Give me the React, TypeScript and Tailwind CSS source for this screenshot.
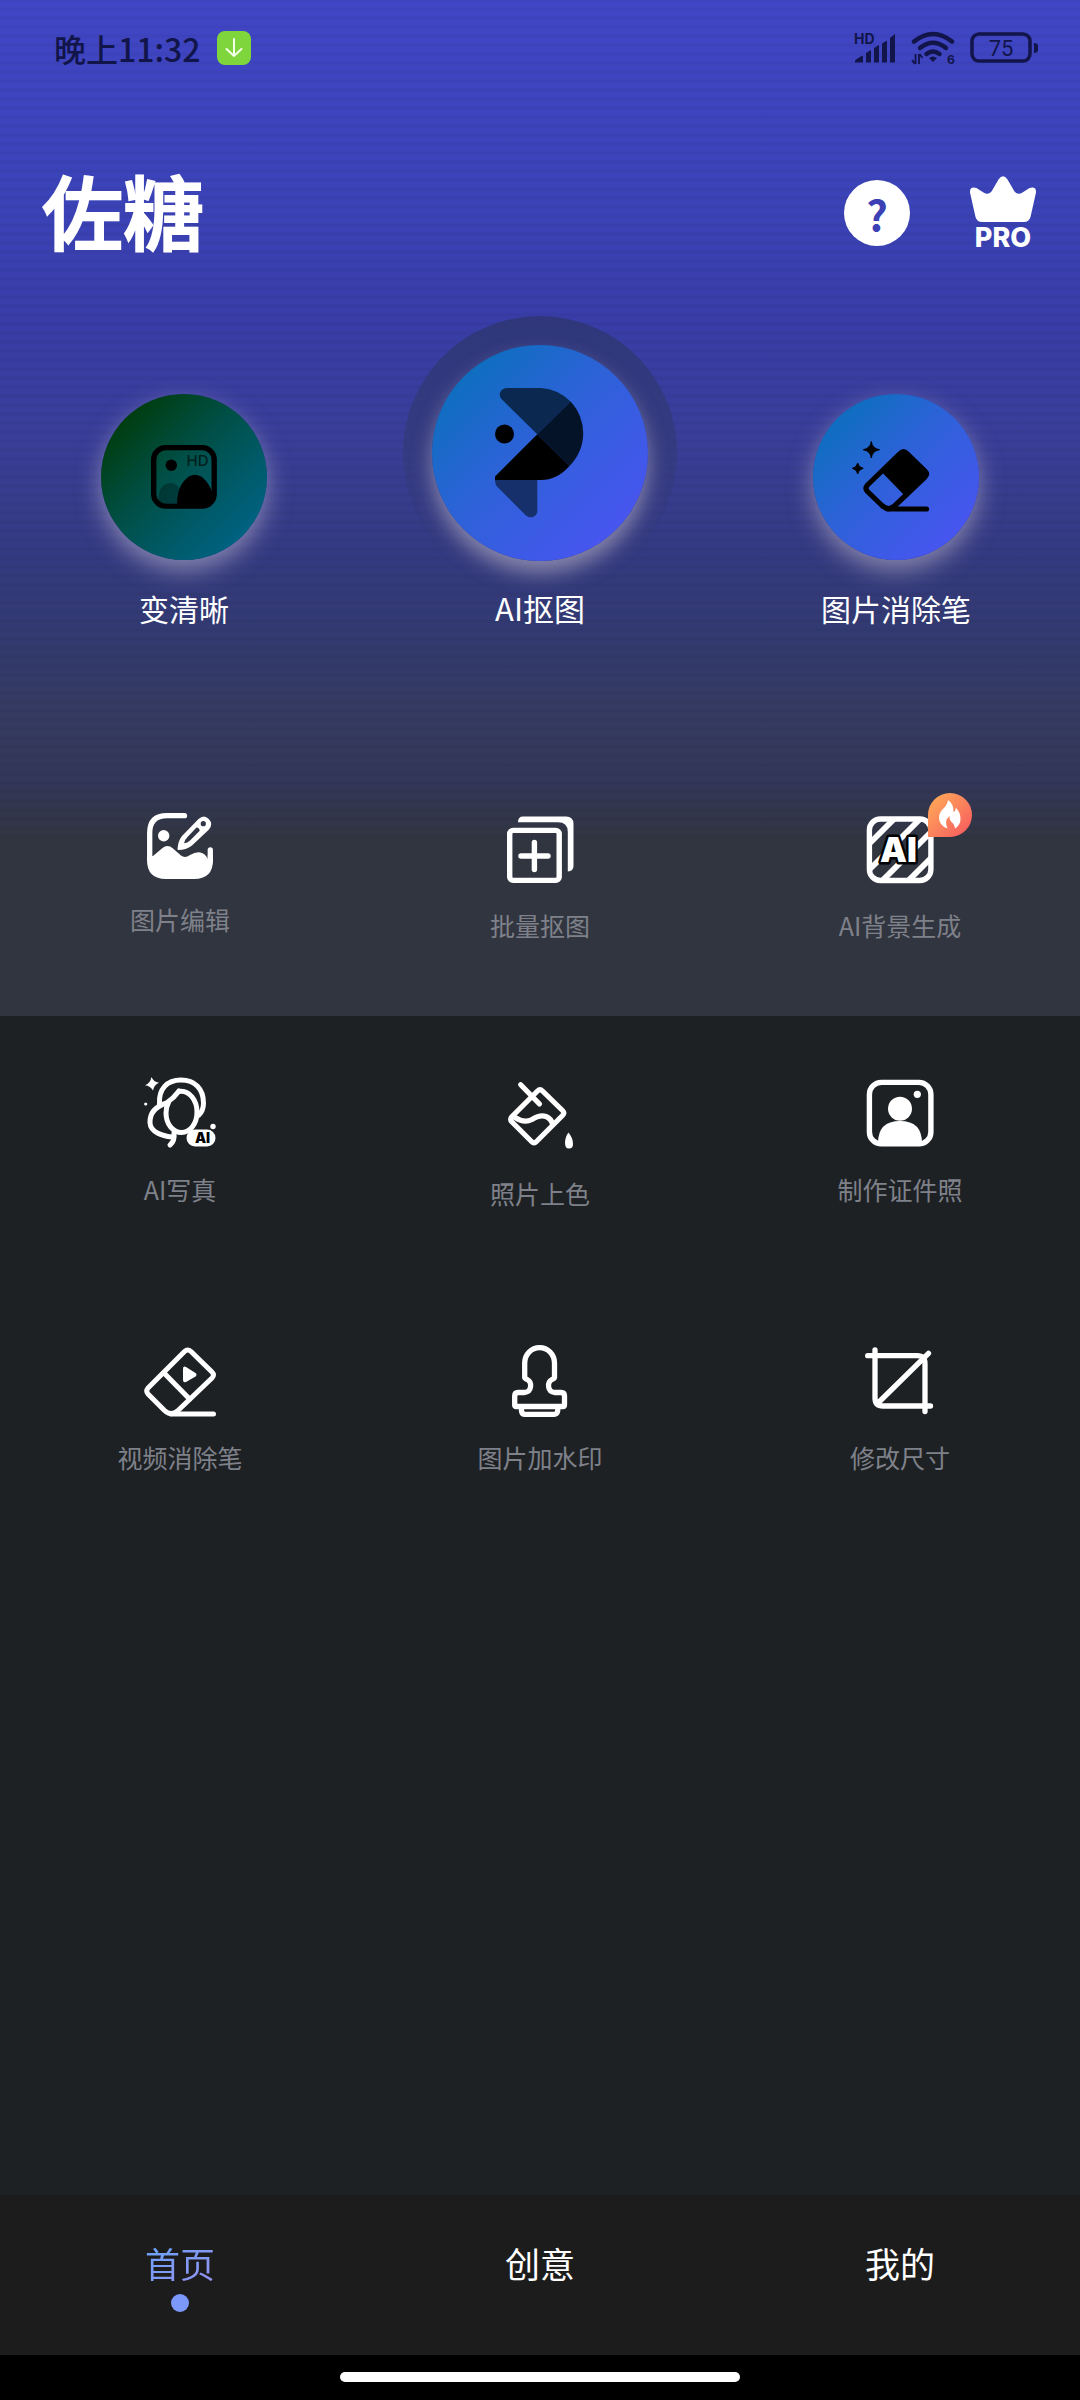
import type { ReactNode } from "react";

const INK = "#11154a";

/* ---------- status bar ---------- */

function SignalIcon() {
  return (
    <svg width="42" height="40" viewBox="0 -4 42 40" className="overflow-visible" aria-label="HD" role="img">
      <text x="0" y="12" fontSize="14" fontWeight="700" fill={INK} fontFamily="Inter, sans-serif">HD</text>
      <g fill={INK}>
        <path d="M1 30.500v-1.500q0-1 1-1.600l5.500-3.400q1.500-.7 1.500.8v5.700z" />
        <path d="M12 30.500v-9.500l5-3v12.500z" />
        <path d="M20 30.500v-14.500l5-3v17.500z" />
        <path d="M28 30.500v-19l5-3v22z" />
        <path d="M36 30.500v-24.500l5-4v28.500z" />
      </g>
    </svg>
  );
}

function WifiIcon() {
  return (
    <svg width="44" height="36" viewBox="0 0 44 36" aria-hidden="true">
      <g fill="none" stroke={INK} strokeWidth="4.500" strokeLinecap="round">
        <path d="M3 11.500q19-15 38 0" />
        <path d="M9 18q13-10.500 26 0" />
        <path d="M15.500 24q6.500-5 13 0" />
      </g>
      <path d="M18 28q4-3 8 0l-4 4z" fill={INK} />
      <path d="M4.500 24v10M4 34l-3-4M8 34v-10M8.500 24l3 4" stroke={INK} strokeWidth="1.800" fill="none" />
      <text x="36" y="34" fontSize="12" fontWeight="700" fill={INK} fontFamily="Inter, sans-serif">6</text>
    </svg>
  );
}

function BatteryIcon() {
  return (
    <svg width="70" height="32" viewBox="0 0 70 32" role="img" aria-label="75">
      <rect x="2" y="2" width="58" height="27" rx="7" fill="none" stroke={INK} strokeWidth="3.500" />
      <path d="M64 11q4 0 4 3v4q0 3-4 3z" fill={INK} />
      <text x="31" y="23.500" textAnchor="middle" fontSize="22" fontWeight="400" fill={INK} fontFamily="Roboto, sans-serif">75</text>
    </svg>
  );
}

function StatusBar() {
  return (
    <div className="flex h-24 items-center justify-between pl-[54px] pr-[40px]">
      <div className="flex items-center gap-[16px]">
        <span className="text-[32px] leading-[40px] font-medium text-[#11154a]">晚上11:32</span>
        <span className="flex size-[34px] items-center justify-center rounded-[8px] bg-[#7ed63c]">
          <svg width="18" height="20" viewBox="0 0 18 20" fill="none" stroke="#f4ffe9" strokeWidth="2" strokeLinecap="round" strokeLinejoin="round" aria-hidden="true">
            <path d="M9 1v17M1.500 11l7.500 7 7.500-7" />
          </svg>
        </span>
      </div>
      <div className="flex items-center gap-[15px]">
        <SignalIcon />
        <WifiIcon />
        <BatteryIcon />
      </div>
    </div>
  );
}

/* ---------- hero icons ---------- */

function HdPhotoIcon() {
  return (
    <svg width="66" height="64" viewBox="0 0 66 64" aria-hidden="true">
      <path d="M7 58Q7 38 20 38Q30 38 33 58z" fill="#000" opacity=".3" />
      <rect x="2.700" y="2.700" width="60.500" height="58.500" rx="12" fill="none" stroke="#000" strokeWidth="5.300" />
      <circle cx="20.300" cy="20.300" r="5.700" />
      <path d="M26 60Q26 44 33 36Q44 23.500 55 36Q60 42 63 52L54 62H28z" />
      <text x="35.500" y="21" fontSize="15" fontWeight="500" fill="#01201d" fontFamily="Inter, sans-serif">HD</text>
    </svg>
  );
}

function CutoutLogo() {
  return (
    <svg width="90" height="130" viewBox="0 0 90 130" aria-hidden="true">
      <path d="M12 0H46A46 46 0 0 1 75.500 13.500L42.300 46.300L7 11.500C2 6.500 6 0 12 0z" fill="#0b2850" />
      <path d="M75.500 13.500A46 46 0 0 1 74.500 78L42.300 46.300z" fill="#051329" />
      <path d="M42.300 46.300L74.500 78Q62 92 46 92H0V88.500z" fill="#000" />
      <path d="M0 92H42.300V123C42.300 129 35 131.500 30.500 127L2 98.500Q0 96 0 92z" fill="#15306b" />
      <circle cx="9.500" cy="46" r="9.500" fill="#000" />
    </svg>
  );
}

function MagicEraserIcon() {
  return (
    <svg width="92" height="92" viewBox="0 0 92 92" aria-hidden="true">
      <path d="M21.300 10.500Q22.200 17.500 29.500 18.700Q22.200 19.800 21.300 27Q20.400 19.800 13.200 18.700Q20.400 17.500 21.300 10.500z" stroke="#000" strokeWidth="1" />
      <path d="M7.700 32Q8.500 36.500 13.200 37.300Q8.500 38.200 7.700 43Q6.900 38.200 2.300 37.300Q6.900 36.500 7.700 32z" stroke="#000" strokeWidth="1" />
      <g fill="none" stroke="#000" strokeWidth="5.200" strokeLinejoin="round" strokeLinecap="round">
        <path d="M50 22.500L17.500 54Q14.500 57.300 17.500 60.500L32 74.500Q38.500 80.500 44.500 75L75 46Q78 43 75 40L57 22.500Q53.500 19 50 22.500z" />
        <path d="M38 78H76.500" />
      </g>
      <path d="M31.700 41L50 22.500Q53.500 19 57 22.500L75 40Q78 43 75 46L55 65z" />
    </svg>
  );
}

function CrownIcon() {
  return (
    <svg width="66" height="46" viewBox="0 0 66 46" fill="#fff" aria-hidden="true">
      <path d="M28.500 3.500Q33-3 37.500 3.500L44.500 15.500Q48 19.500 52.500 16.500L59.500 12Q66.500 10 66 16.500L60.500 41Q59 46 54 46H12Q7 46 5.500 41L0 16.500Q-.5 10 6.500 12L13.500 16.500Q18 19.500 21.500 15.500z" />
    </svg>
  );
}

/* ---------- tool icons ---------- */

function EditPhotoIcon() {
  return (
    <svg width="66" height="66" viewBox="0 0 66 66" aria-hidden="true">
      <path d="M37.500 2.700H20Q2.700 2.700 2.700 20V46" fill="none" stroke="#fff" strokeWidth="5.300" strokeLinecap="round" />
      <path d="M63.300 37V48" stroke="#fff" strokeWidth="5.300" strokeLinecap="round" />
      <circle cx="16.700" cy="22.700" r="5.700" fill="#fff" />
      <path d="M0 43H6L15.500 35Q20.700 31 26 35.500L34 42.500Q38 45.500 43 42Q53 36 59 43L60.800 46V42H66V47Q66 66 47 66H19Q0 66 0 47z" fill="#fff" />
      <path fillRule="evenodd" fill="#fff" d="M30.500 36Q31 28 35 23L51.500 6Q57 1 61.800 6Q66.500 11 62 16.500L45 32.500Q39 37 31.500 37Q30.500 37 30.500 36zM37 30.300Q40.500 30 43 27.500L52.500 18Q53 15 49.500 14.500L40.500 24Q37.500 27 37 30.300zM53.700 10.700a2.600 2.600 0 1 0 5.200 0a2.600 2.600 0 1 0-5.200 0z" />
    </svg>
  );
}

function BatchIcon() {
  return (
    <svg width="72" height="72" viewBox="0 0 72 72" aria-hidden="true">
      <path d="M14 9.300Q14 3.500 19 3.500H62Q69.500 3.500 69.500 11V53Q69.500 58 63.800 58.500V19Q63.800 9.300 54 9.300z" fill="#fff" />
      <g fill="none" stroke="#fff" strokeWidth="5.400" strokeLinecap="round">
        <rect x="5.700" y="17.400" width="49.500" height="50" rx="3.500" />
        <path d="M30.400 29.500V56.500M17 43H44" />
      </g>
    </svg>
  );
}

function AiBackgroundIcon() {
  return (
    <svg width="72" height="72" viewBox="0 0 72 72" aria-hidden="true">
      <defs>
        <clipPath id="frame">
          <rect x="5" y="5" width="62" height="63" rx="11" />
        </clipPath>
      </defs>
      <g clipPath="url(#frame)" stroke="#fff" strokeWidth="5.800">
        <path d="M0 36L36 0M0 62L62 0M14 72L72 14M40 72L72 40" />
      </g>
      <rect x="5.400" y="6" width="61.500" height="61.500" rx="11" fill="none" stroke="#fff" strokeWidth="5.400" />
      <text x="34.500" y="49" textAnchor="middle" fontSize="34" fontWeight="900" fill="#fff" stroke="#000" strokeWidth="5" strokeLinejoin="round" paintOrder="stroke" fontFamily="Inter, sans-serif">AI</text>
    </svg>
  );
}

function PortraitIcon() {
  return (
    <svg width="72" height="72" viewBox="0 0 72 72" aria-hidden="true">
      <path d="M7.500 0Q9.500 5 15 5.700Q10 8 9 13.500Q6.500 9 1 8.300Q6.500 6 7.500 0z" fill="#fff" />
      <circle cx="1.700" cy="27" r="1.600" fill="#fff" />
      <g fill="none" stroke="#fff" strokeWidth="5" strokeLinecap="round" strokeLinejoin="round">
        <path d="M35 14.500C46 13 53 24 53 35C53 47 46 55.500 37.500 55.500C29 55.500 22 47 22 36Q22 30 24.500 25.500" />
        <path d="M15.500 27C14.500 12 23 3 37 3C51 3 59.500 12 59.500 26Q59.500 34 54.500 38.500" />
        <path d="M35 14Q30 21 22.500 26C13 29 5.500 35 6 46C6.500 55 18 59 28 60" />
        <path d="M30 56Q31 64 26 68" />
      </g>
      <rect x="42.500" y="52.500" width="29" height="17" rx="8.500" fill="#fff" />
      <circle cx="69" cy="49.500" r="2.700" fill="#fff" />
      <text x="58.500" y="66" textAnchor="middle" fontSize="14" fontWeight="900" fill="#000" fontFamily="Inter, sans-serif">AI</text>
    </svg>
  );
}

function PaintBucketIcon() {
  return (
    <svg width="72" height="76" viewBox="0 0 72 76" aria-hidden="true">
      <g fill="none" stroke="#fff" strokeWidth="5.200" strokeLinecap="round" strokeLinejoin="round">
        <path d="M33.500 14Q36 11.500 38.500 14L58.500 33.500Q61 36 58.500 38.500L32.500 64.500Q30 67 27.500 64.500L8 45Q5.500 42.500 8 39.500z" />
        <path d="M16.700 7.700L35.500 27" />
        <path d="M11 40.500Q20 46.500 28 42.500Q36 37.500 42 39.500Q47 41.500 48.500 47" />
      </g>
      <path d="M64.500 55.500Q69 61 69 67Q69 71.500 65 71.500Q61 71.500 61 66Q61 60 64.500 55.500z" fill="#fff" />
    </svg>
  );
}

function IdPhotoIcon() {
  return (
    <svg width="72" height="72" viewBox="0 0 72 72" aria-hidden="true">
      <rect x="5.400" y="5.400" width="61.500" height="61.500" rx="12" fill="none" stroke="#fff" strokeWidth="5.400" />
      <circle cx="36" cy="31.700" r="12" fill="#fff" />
      <path d="M14 66Q14 44 36 44Q58 44 58 66L56 69H16z" fill="#fff" />
      <circle cx="53.300" cy="17.300" r="3.600" fill="#fff" />
    </svg>
  );
}

function VideoEraserIcon() {
  return (
    <svg width="72" height="72" viewBox="0 0 72 72" aria-hidden="true">
      <g fill="none" stroke="#fff" strokeWidth="5" strokeLinecap="round" strokeLinejoin="round">
        <path d="M40.500 6.500L4 43Q1.500 46 4 49L20.500 65.500Q27 71.500 33.500 66L68 33Q71 30 68 27L47 6.500Q43.700 3.500 40.500 6.500z" />
        <path d="M20.500 28.500L45.500 54M27 69H69.500" />
      </g>
      <path d="M39 24Q39 20.500 42 22L51.500 28Q53.500 29.500 51.500 31.500L42 37Q39 38 39 35z" fill="#fff" />
    </svg>
  );
}

function StampIcon() {
  return (
    <svg width="72" height="72" viewBox="0 0 72 72" aria-hidden="true">
      <g fill="none" stroke="#fff" strokeWidth="5.300" strokeLinejoin="round">
        <path d="M20.700 18A14.900 15.300 0 0 1 50.500 18V32.500Q50.500 33.500 48 34.500C43 37 43 47 51 47.500H57Q60.500 47.500 60.500 51V60Q60.500 61.500 59 61.500H12.200Q10.700 61.500 10.700 60V51Q10.700 47.500 14.200 47.500H20.200C28.200 47 28.200 37 23.200 34.500Q20.700 33.500 20.700 32.500z" />
        <path d="M17.500 62V66Q18 69.300 21 69.300H50.200Q53 69.300 53.700 66V62" />
      </g>
    </svg>
  );
}

function ResizeIcon() {
  return (
    <svg width="72" height="72" viewBox="0 0 72 72" aria-hidden="true">
      <g fill="none" stroke="#fff" strokeWidth="5.300" strokeLinecap="round">
        <path d="M11 5V53Q11 61 19 61H66.500" />
        <path d="M3.700 10.700H53Q61 10.700 61 18.700V66.500" />
        <path d="M64.500 8.300L14 58" />
      </g>
    </svg>
  );
}

function HotBadge() {
  return (
    <span className="absolute -top-5 left-16 flex size-[44px] items-center justify-center rounded-full rounded-bl-none bg-linear-to-br from-[#fdae55] to-[#f6525f]">
      <svg width="24" height="30" viewBox="0 0 24 30" fill="#fff" aria-hidden="true">
        <path d="M10 0Q16 4 15.500 12Q18 11 17.500 7.500Q22.500 12 22.500 19Q22.500 25 17 28.500Q16.500 24 13 21.500Q11 19.500 11.500 16Q8 19 8 22Q8 25 9.500 28.500Q1 25.500 1 17.500Q1 13 4.500 9.500Q9.500 5 10 0z" />
      </svg>
    </span>
  );
}

/* ---------- building blocks ---------- */

function HeroAction({ label, children, large }: { label: string; children: ReactNode; large?: boolean }) {
  return (
    <button type="button" className="flex flex-col items-center text-white">
      {children}
      <span className={large ? "text-[31px] leading-[36px]" : "mt-[30px] text-[30px] leading-[36px]"}>{label}</span>
    </button>
  );
}

const tools: { label: string; icon: ReactNode; hot?: boolean }[] = [
  { label: "图片编辑", icon: <EditPhotoIcon /> },
  { label: "批量抠图", icon: <BatchIcon /> },
  { label: "AI背景生成", icon: <AiBackgroundIcon />, hot: true },
  { label: "AI写真", icon: <PortraitIcon /> },
  { label: "照片上色", icon: <PaintBucketIcon /> },
  { label: "制作证件照", icon: <IdPhotoIcon /> },
  { label: "视频消除笔", icon: <VideoEraserIcon /> },
  { label: "图片加水印", icon: <StampIcon /> },
  { label: "修改尺寸", icon: <ResizeIcon /> },
];

export default function App() {
  return (
    <div
      className="flex min-h-screen flex-col bg-[#1e2124] bg-[repeating-linear-gradient(180deg,#0000000d_0px,#00000000_3px,#00000000_6px,#0000000d_9px),linear-gradient(180deg,#4146c6_0px,#3b43b8_200px,#383da8_320px,#3a3e98_440px,#343a80_560px,#323a70_640px,#353b62_710px,#33375a_780px,#31353f_845px,#31353f_1016px)] bg-[length:100%_845px,100%_1016px] bg-no-repeat"
      style={{ fontFamily: '"Noto Sans CJK SC", sans-serif' }}
    >
      <StatusBar />

      <header className="mt-[69px] flex h-24 items-center justify-between pl-[42px] pr-[44px]">
        <h1 className="pb-[8px] text-[81px] leading-[88px] font-medium text-white [-webkit-text-stroke:2px_white] [stroke-linejoin:round]">佐糖</h1>
        <div className="flex items-center gap-[60px]">
          <button type="button" aria-label="帮助" className="flex size-[66px] items-center justify-center rounded-full bg-white text-[42px] leading-[42px] font-bold text-[#3b41b4]">
            ?
          </button>
          <button type="button" className="flex flex-col items-center text-white">
            <CrownIcon />
            <span className="mt-[3px] font-[Inter] text-[27px] leading-[26px] font-extrabold">PRO</span>
          </button>
        </div>
      </header>

      <section className="mt-[55px] grid grid-cols-3 items-end px-[6px]">
        <HeroAction label="变清晰">
          <span className="flex size-[166px] items-center justify-center rounded-full bg-[linear-gradient(135deg,#003c0c_12%,#005048_45%,#006488_90%)] shadow-[0_10px_24px_#d8cfe080]">
            <HdPhotoIcon />
          </span>
        </HeroAction>
        <HeroAction label="AI抠图" large>
          <span className="flex size-[274px] items-center justify-center rounded-full bg-[linear-gradient(180deg,#2f377a_0%,#343a7acc_45%,#343a7a00_100%)]">
            <span className="flex size-[216px] items-center justify-center rounded-full bg-[linear-gradient(135deg,#0a70bc_10%,#2d62d8_45%,#4a54f2_90%)] shadow-[0_12px_20px_#d8cfd880]">
              <CutoutLogo />
            </span>
          </span>
        </HeroAction>
        <HeroAction label="图片消除笔">
          <span className="flex size-[166px] items-center justify-center rounded-full bg-[linear-gradient(135deg,#0a70bc_10%,#2d62d8_45%,#4a54f2_90%)] shadow-[0_10px_24px_#d8cfd880]">
            <MagicEraserIcon />
          </span>
        </HeroAction>
      </section>

      <section className="mt-[187px] mb-[134px] grid grid-cols-3 items-start gap-y-[134px]">
        {tools.map((tool) => (
          <button key={tool.label} type="button" className="flex flex-col items-center gap-[24px] pb-[2px] text-[#7f818a]">
            <span className="relative">
              {tool.icon}
              {tool.hot && <HotBadge />}
            </span>
            <span className="text-[25px] leading-[32px] font-normal">{tool.label}</span>
          </button>
        ))}
      </section>

      <nav className="mt-auto grid h-40 grid-cols-3 items-start bg-[#1c1c1c] pt-[46px] text-[35px] leading-[44px] text-white">
        <a href="#home" aria-current="page" className="flex flex-col items-center gap-[9px]">
          <span className="bg-linear-to-br from-[#64a4fb] to-[#9590f0] bg-clip-text text-transparent">首页</span>
          <span className="size-[18px] rounded-full bg-[#7d98fb]" />
        </a>
        <a href="#create" className="text-center">创意</a>
        <a href="#mine" className="text-center">我的</a>
      </nav>
      <div className="flex h-[45px] justify-center bg-black pt-[17px]">
        <div className="h-[10px] w-[400px] rounded-full bg-white" />
      </div>
    </div>
  );
}
